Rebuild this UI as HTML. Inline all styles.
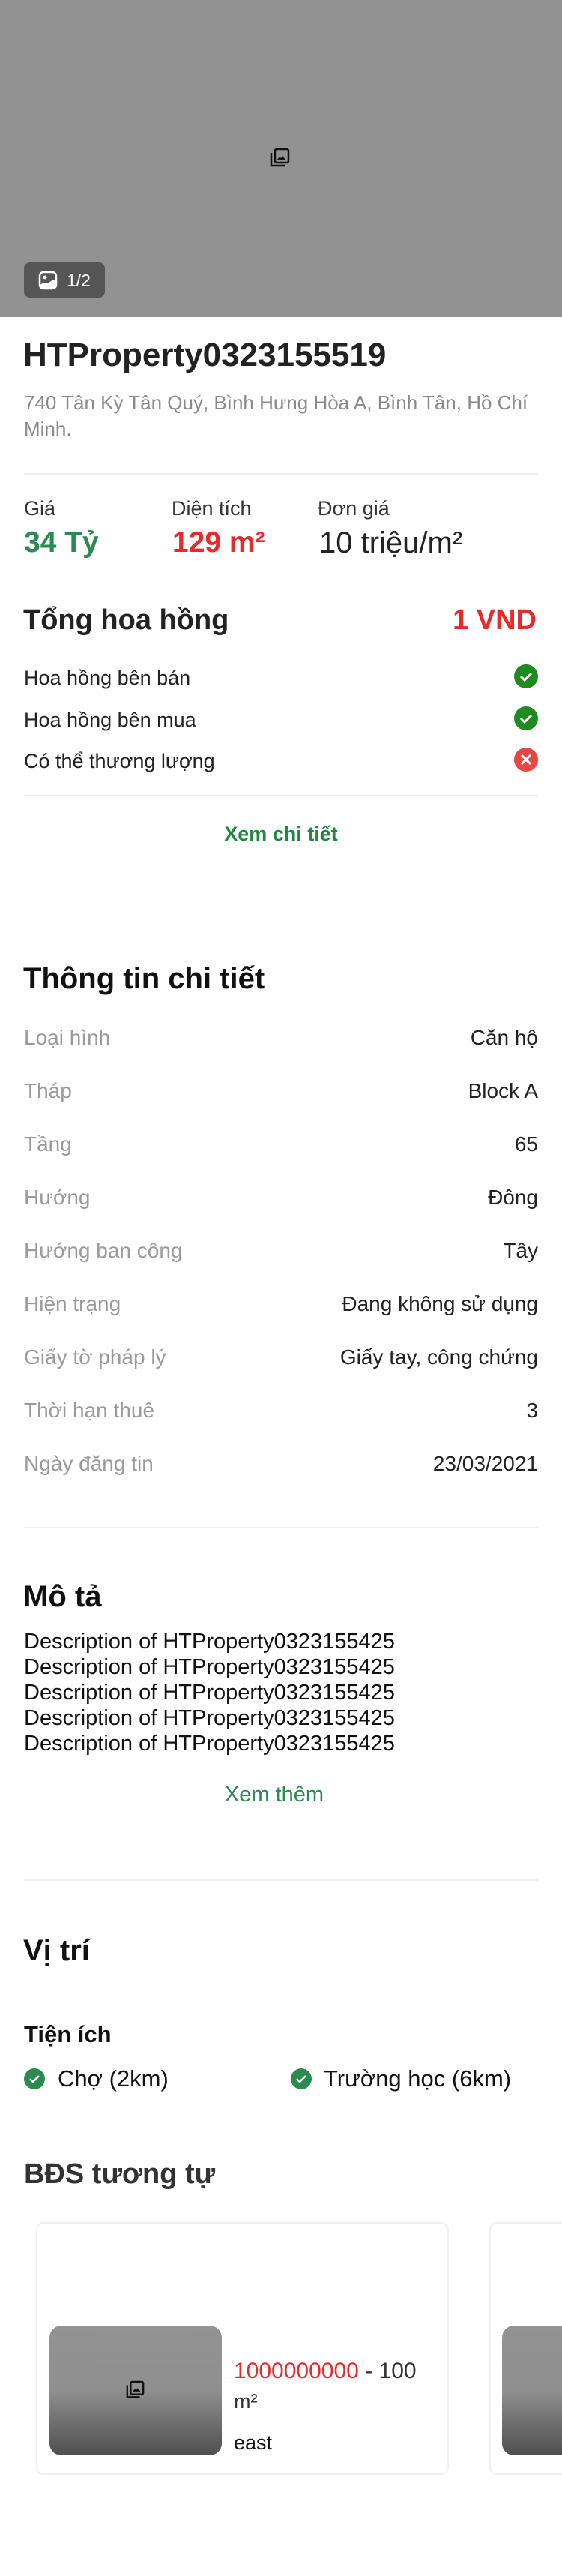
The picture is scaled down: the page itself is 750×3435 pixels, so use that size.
<!DOCTYPE html>
<html><head><meta charset="utf-8">
<style>
*{margin:0;padding:0;box-sizing:border-box}
body{width:750px;height:3435px;background:#fff;font-family:"Liberation Sans","Noto Sans CJK SC",sans-serif;position:relative;overflow:hidden;color:#222}
.a{position:absolute;white-space:nowrap}
.hr{position:absolute;left:32px;width:686px;height:2px;background:#f0f0f0}
.lbl{font-size:28px;color:#9a9a9a;line-height:34px}
.val{font-size:28px;color:#222;line-height:34px;right:32px}
.h{font-weight:bold;font-size:40px;color:#111;line-height:48px}
</style></head><body>
<div class="a" style="left:0;top:0;width:750px;height:423px;background:#929292"></div>
<svg class="a" style="left:359px;top:197px" width="29" height="29" viewBox="0 0 29 29"><rect x="8" y="2" width="18" height="18" rx="2" fill="none" stroke="#111" stroke-width="2.5"/><path d="M3 7v17h18" fill="none" stroke="#111" stroke-width="2.5"/><path d="M11 16l3-4 2 2 2-3 4 5z" fill="#111"/></svg>
<div class="a" style="left:32px;top:350px;width:108px;height:47px;background:#555;border-radius:8px"></div>
<svg class="a" style="left:51px;top:361px" width="26" height="26" viewBox="0 0 26 26"><rect x="2" y="2" width="22" height="22" rx="5" fill="none" stroke="#fff" stroke-width="2.5"/><circle cx="9" cy="9" r="2.5" fill="#fff"/><path d="M2 20c5-6 9-2 12-4s6-5 10-3v6a5 5 0 0 1-5 5H7a5 5 0 0 1-5-4z" fill="#fff"/></svg>
<div class="a" style="left:89px;top:359px;font-size:23px;color:#fff;line-height:30px">1/2</div>

<div class="a" style="left:31px;top:449px;font-size:44px;font-weight:bold;color:#222;line-height:50px">HTProperty0323155519</div>
<div class="a" style="left:32px;top:520px;font-size:26px;color:#8a8a8a;line-height:35px;white-space:normal;width:690px">740 Tân Kỳ Tân Quý, Bình Hưng Hòa A, Bình Tân, Hồ Chí Minh.</div>
<div class="hr" style="top:631px"></div>

<div class="a" style="left:32px;top:661px;font-size:27px;color:#333;line-height:34px">Giá</div>
<div class="a" style="left:229px;top:661px;font-size:27px;color:#333;line-height:34px">Diện tích</div>
<div class="a" style="left:424px;top:661px;font-size:27px;color:#333;line-height:34px">Đơn giá</div>
<div class="a" style="left:32px;top:701px;font-size:39px;font-weight:bold;color:#2a8a4f;line-height:46px">34 Tỷ</div>
<div class="a" style="left:230px;top:701px;font-size:39px;font-weight:bold;color:#e52b2b;line-height:46px">129 m²</div>
<div class="a" style="left:426px;top:701px;font-size:40px;color:#222;line-height:46px">10 triệu/m²</div>

<div class="a" style="left:31px;top:804px;font-size:38px;font-weight:bold;color:#222;line-height:46px">Tổng hoa hồng</div>
<div class="a" style="right:34px;top:804px;font-size:38px;font-weight:bold;color:#e52b2b;line-height:46px">1 VND</div>
<div class="a" style="left:32px;top:887px;font-size:27px;color:#222;line-height:34px">Hoa hồng bên bán</div>
<div class="a" style="left:32px;top:943px;font-size:27px;color:#222;line-height:34px">Hoa hồng bên mua</div>
<div class="a" style="left:32px;top:998px;font-size:27px;color:#222;line-height:34px">Có thể thương lượng</div>
<svg class="a" style="left:686px;top:886px" width="32" height="32" viewBox="0 0 32 32"><circle cx="16" cy="16" r="16" fill="#1f8a1f"/><path d="M9 16l5 5 9-9" fill="none" stroke="#fff" stroke-width="3"/></svg>
<svg class="a" style="left:686px;top:942px" width="32" height="32" viewBox="0 0 32 32"><circle cx="16" cy="16" r="16" fill="#1f8a1f"/><path d="M9 16l5 5 9-9" fill="none" stroke="#fff" stroke-width="3"/></svg>
<svg class="a" style="left:686px;top:997px" width="32" height="32" viewBox="0 0 32 32"><circle cx="16" cy="16" r="16" fill="#e84545"/><path d="M10 10l12 12M22 10L10 22" fill="none" stroke="#fff" stroke-width="3"/></svg>
<div class="hr" style="top:1060px"></div>
<div class="a" style="left:0;width:750px;text-align:center;top:1095px;font-size:27px;font-weight:bold;color:#1f8a3f;line-height:34px">Xem chi tiết</div>

<div class="a h" style="left:31px;top:1281px">Thông tin chi tiết</div>
<div class="a lbl" style="left:32px;top:1367px">Loại hình</div><div class="a val" style="top:1367px">Căn hộ</div>
<div class="a lbl" style="left:32px;top:1438px">Tháp</div><div class="a val" style="top:1438px">Block A</div>
<div class="a lbl" style="left:32px;top:1509px">Tầng</div><div class="a val" style="top:1509px">65</div>
<div class="a lbl" style="left:32px;top:1580px">Hướng</div><div class="a val" style="top:1580px">Đông</div>
<div class="a lbl" style="left:32px;top:1651px">Hướng ban công</div><div class="a val" style="top:1651px">Tây</div>
<div class="a lbl" style="left:32px;top:1722px">Hiện trạng</div><div class="a val" style="top:1722px">Đang không sử dụng</div>
<div class="a lbl" style="left:32px;top:1793px">Giấy tờ pháp lý</div><div class="a val" style="top:1793px">Giấy tay, công chứng</div>
<div class="a lbl" style="left:32px;top:1864px">Thời hạn thuê</div><div class="a val" style="top:1864px">3</div>
<div class="a lbl" style="left:32px;top:1935px">Ngày đăng tin</div><div class="a val" style="top:1935px">23/03/2021</div>
<div class="hr" style="top:2036px"></div>

<div class="a h" style="left:31px;top:2105px">Mô tả</div>
<div class="a" style="left:32px;top:2172px;font-size:29px;color:#111;line-height:34px">Description of HTProperty0323155425<br>Description of HTProperty0323155425<br>Description of HTProperty0323155425<br>Description of HTProperty0323155425<br>Description of HTProperty0323155425</div>
<div class="a" style="left:0;width:732px;text-align:center;top:2376px;font-size:29px;color:#2a8a4f;line-height:34px">Xem thêm</div>
<div class="hr" style="top:2506px"></div>

<div class="a h" style="left:31px;top:2577px">Vị trí</div>
<div class="a" style="left:32px;top:2694px;font-size:31px;font-weight:bold;color:#111;line-height:38px">Tiện ích</div>
<svg class="a" style="left:32px;top:2758px" width="28" height="28" viewBox="0 0 28 28"><circle cx="14" cy="14" r="14" fill="#2a8a4f"/><path d="M8 14l4 4 8-8" fill="none" stroke="#fff" stroke-width="2.6"/></svg>
<div class="a" style="left:77px;top:2754px;font-size:31px;color:#111;line-height:36px">Chợ (2km)</div>
<svg class="a" style="left:388px;top:2758px" width="28" height="28" viewBox="0 0 28 28"><circle cx="14" cy="14" r="14" fill="#2a8a4f"/><path d="M8 14l4 4 8-8" fill="none" stroke="#fff" stroke-width="2.6"/></svg>
<div class="a" style="left:432px;top:2754px;font-size:31px;color:#111;line-height:36px">Trường học (6km)</div>

<div class="a" style="left:32px;top:2876px;font-size:38px;font-weight:bold;color:#333;line-height:46px">BĐS tương tự</div>
<div class="a" style="left:48px;top:2963px;width:551px;height:337px;border:2px solid #f0f0f0;border-radius:10px"></div>
<div class="a" style="left:653px;top:2963px;width:200px;height:337px;border:2px solid #f0f0f0;border-radius:10px"></div>
<div class="a" style="left:66px;top:3101px;width:230px;height:173px;border-radius:16px;background:linear-gradient(#939393 0%,#8f8f8f 50%,#4f4f4f 100%)"></div>
<div class="a" style="left:670px;top:3101px;width:230px;height:173px;border-radius:16px;background:linear-gradient(#939393 0%,#8f8f8f 50%,#4f4f4f 100%)"></div>
<svg class="a" style="left:167px;top:3174px" width="27" height="27" viewBox="0 0 29 29"><rect x="8" y="2" width="18" height="18" rx="2" fill="none" stroke="#111" stroke-width="2.5"/><path d="M3 7v17h18" fill="none" stroke="#111" stroke-width="2.5"/><path d="M11 16l3-4 2 2 2-3 4 5z" fill="#111"/></svg>
<div class="a" style="left:312px;top:3145px;font-size:30px;color:#333;line-height:34px"><span style="color:#e52b2b">1000000000</span> - 100</div>
<div class="a" style="left:312px;top:3185px;font-size:27px;color:#333;line-height:34px">m²</div>
<div class="a" style="left:312px;top:3240px;font-size:27px;color:#111;line-height:34px">east</div>
</body></html>
